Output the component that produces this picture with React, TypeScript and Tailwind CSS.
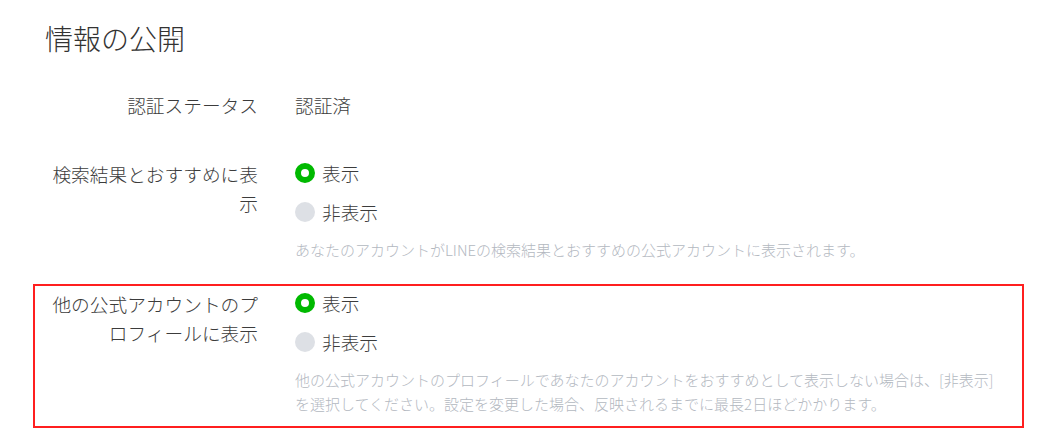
const font = { fontFamily: '"Noto Sans CJK JP", "Noto Sans", sans-serif' };

const Radio = ({ checked, label }: { checked: boolean; label: string }) => (
  <div className="flex items-center gap-[7px] h-[28px]">
    {checked ? (
      <span className="w-[20px] h-[20px] rounded-full border-[6px] border-[#00b900] bg-white" />
    ) : (
      <span className="w-[20px] h-[20px] rounded-full bg-[#dde0e5]" />
    )}
    <span>{label}</span>
  </div>
);

const Row = ({
  label,
  highlight,
  className,
  children,
}: {
  label: React.ReactNode;
  highlight?: boolean;
  className?: string;
  children: React.ReactNode;
}) => (
  <div
    className={`flex gap-[37px] border-2 pl-[13px] pr-4 pt-[3px] pb-[10px] ${
      highlight ? "border-[#ff1f1f]" : "border-transparent"
    } ${className ?? ""}`}
  >
    <div className="w-[210px] shrink-0 text-right leading-[29px]">{label}</div>
    <div className="flex-1">{children}</div>
  </div>
);

export default function App() {
  return (
    <div className="bg-white min-h-screen text-[#3c3c3c] text-[18.7px] font-light" style={font}>
      <div className="w-[991px] ml-[33px] pt-[18px]">
        <h1 className="pl-[12px] text-[28px] leading-[40px] font-light text-[#333]">
          情報の公開
        </h1>

        <Row label="認証ステータス" className="mt-[27px]">
          <div className="leading-[29px]">認証済</div>
        </Row>

        <Row label="検索結果とおすすめに表示" className="mt-[23px]">
          <div className="flex flex-col gap-[11px]">
            <Radio checked label="表示" />
            <Radio checked={false} label="非表示" />
          </div>
          <p className="mt-[12px] text-[15px] leading-[24px] text-[#b3b8bf]">
            あなたのアカウントがLINEの検索結果とおすすめの公式アカウントに表示されます。
          </p>
        </Row>

        <Row label="他の公式アカウントのプロフィールに表示" highlight className="mt-[10px]">
          <div className="flex flex-col gap-[11px]">
            <Radio checked label="表示" />
            <Radio checked={false} label="非表示" />
          </div>
          <p className="mt-[12px] text-[15px] leading-[24px] text-[#b3b8bf]">
            他の公式アカウントのプロフィールであなたのアカウントをおすすめとして表示しない場合は、[非表示]
            <br />
            を選択してください。設定を変更した場合、反映されるまでに最長2日ほどかかります。
          </p>
        </Row>
      </div>
    </div>
  );
}
